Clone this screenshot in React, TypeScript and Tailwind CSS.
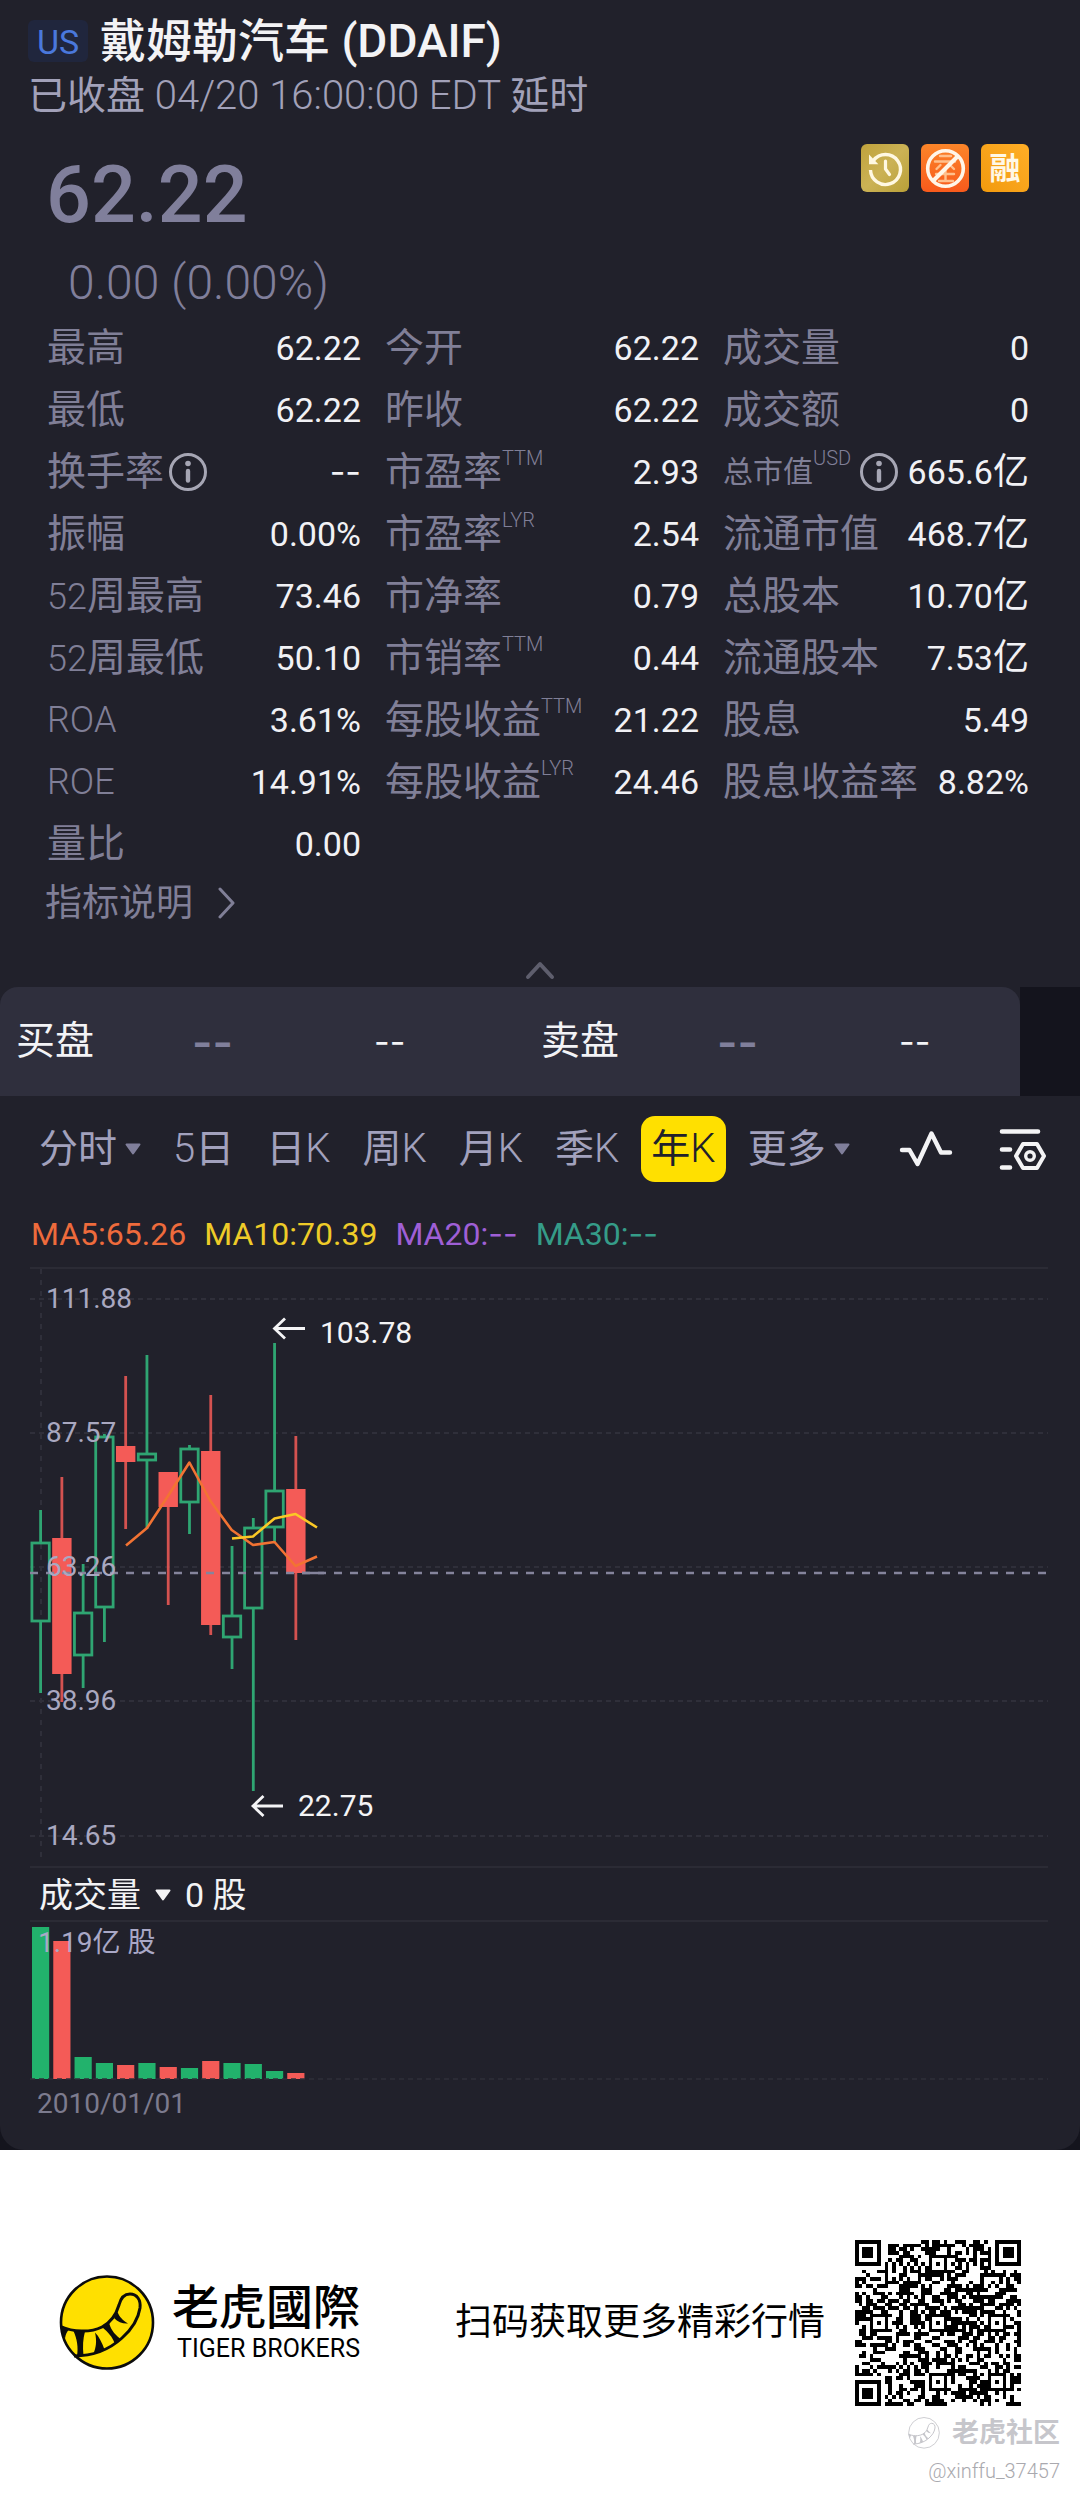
import React from 'react';

interface Stat {
    label: string;
    value: string;
    sup?: string;
    info?: boolean;
    small?: boolean;
}

interface Candle {
    up: boolean;
    high: number;
    top: number;
    bottom: number;
    low: number;
    volume: number;
}

const STATS: Stat[] = [
    { label: '最高', value: '62.22' },
    { label: '今开', value: '62.22' },
    { label: '成交量', value: '0' },
    { label: '最低', value: '62.22' },
    { label: '昨收', value: '62.22' },
    { label: '成交额', value: '0' },
    { label: '换手率', value: '--', info: true },
    { label: '市盈率', sup: 'TTM', value: '2.93' },
    { label: '总市值', sup: 'USD', value: '665.6亿', info: true, small: true },
    { label: '振幅', value: '0.00%' },
    { label: '市盈率', sup: 'LYR', value: '2.54' },
    { label: '流通市值', value: '468.7亿' },
    { label: '52周最高', value: '73.46' },
    { label: '市净率', value: '0.79' },
    { label: '总股本', value: '10.70亿' },
    { label: '52周最低', value: '50.10' },
    { label: '市销率', sup: 'TTM', value: '0.44' },
    { label: '流通股本', value: '7.53亿' },
    { label: 'ROA', value: '3.61%' },
    { label: '每股收益', sup: 'TTM', value: '21.22' },
    { label: '股息', value: '5.49' },
    { label: 'ROE', value: '14.91%' },
    { label: '每股收益', sup: 'LYR', value: '24.46' },
    { label: '股息收益率', value: '8.82%' },
    { label: '量比', value: '0.00' },
];

const PERIODS = [
    { label: '分时', menu: true },
    { label: '5日' },
    { label: '日K' },
    { label: '周K' },
    { label: '月K' },
    { label: '季K' },
    { label: '年K', active: true },
    { label: '更多', menu: true },
];

// Prices are already projected to chart units (y grows downwards)
const CANDLES: Candle[] = [
    { up: true, high: 250, top: 283, bottom: 361, low: 433, volume: 152 },
    { up: false, high: 217, top: 278, bottom: 414, low: 442, volume: 138 },
    { up: true, high: 304, top: 353, bottom: 395, low: 428, volume: 22 },
    { up: true, high: 174, top: 177, bottom: 347, low: 382, volume: 16 },
    { up: false, high: 116, top: 186, bottom: 202, low: 269, volume: 14 },
    { up: true, high: 95, top: 194, bottom: 200, low: 269, volume: 16 },
    { up: false, high: 212, top: 212, bottom: 247, low: 345, volume: 12 },
    { up: true, high: 185, top: 189, bottom: 242, low: 274, volume: 11 },
    { up: false, high: 135, top: 191, bottom: 365, low: 375, volume: 18 },
    { up: true, high: 286, top: 356, bottom: 377, low: 409, volume: 16 },
    { up: true, high: 258, top: 268, bottom: 348, low: 531, volume: 15 },
    { up: true, high: 83, top: 231, bottom: 267, low: 283, volume: 8 },
    { up: false, high: 176, top: 229, bottom: 313, low: 380, volume: 6 },
];

const GRID = [
    { y: 39, price: '111.88' },
    { y: 173, price: '87.57' },
    { y: 307, price: '63.26' },
    { y: 441, price: '38.96' },
    { y: 576, price: '14.65' },
];

const GREEN = '#2fa572';
const RED = '#f45b57';
const candleX = (i: number) => 40.6 + i * 21.27;

// Latin glyphs are set at their own size next to the CJK ones
const Mixed: React.FC<{ text: string; cjk: string; latin: string }> = ({ text, cjk, latin }) => (
    <>
        {(text.match(/--|[\u4e00-\u9fff]+|[^\u4e00-\u9fff-]+/g) || []).map((part, i) => {
            if (part === '--') return <span key={i} className={`font-[Inter,sans-serif] ${latin}`}>--</span>;
            return <span key={i} className={/[\u4e00-\u9fff]/.test(part) ? cjk : latin}>{part}</span>;
        })}
    </>
);

const InfoIcon = () => (
    <svg viewBox="0 0 40 40" className="size-10 shrink-0" fill="none" stroke="#a6a6b4" aria-hidden="true">
        <circle cx="20" cy="20" r="17.5" strokeWidth="3" />
        <circle cx="20" cy="11.5" r="2.8" fill="#a6a6b4" stroke="none" />
        <path d="M20 19v9.5" strokeWidth="4.4" strokeLinecap="round" />
    </svg>
);

const Caret = ({ className }: { className: string }) => (
    <svg viewBox="0 0 16 12" className={className} fill="currentColor" stroke="currentColor" strokeWidth="2" strokeLinejoin="round" aria-hidden="true">
        <path d="M1.5 1.5h13L8 10.5z" />
    </svg>
);

const Badges = () => (
    <div className="flex gap-3">
        <svg viewBox="0 0 48 48" className="size-12" aria-hidden="true">
            <defs>
                <linearGradient id="gold" x1="0" y1="0" x2="1" y2="1">
                    <stop offset="0" stopColor="#c0a23c" />
                    <stop offset="0.5" stopColor="#cbb255" />
                    <stop offset="1" stopColor="#b9a038" />
                </linearGradient>
            </defs>
            <rect width="48" height="48" rx="6" fill="url(#gold)" />
            <g fill="none" stroke="#fff8e2">
                <path d="M12.5 16.5A15 15 0 1 1 9.5 26" strokeWidth="3.4" />
                <path d="M24.5 17v8l4 5.5" strokeWidth="3.2" strokeLinecap="round" strokeLinejoin="round" />
            </g>
            <path d="M8 10.5v9.8h9.4z" fill="#fff8e2" />
        </svg>
        <svg viewBox="0 0 48 48" className="size-12" aria-hidden="true">
            <defs>
                <linearGradient id="orange" x1="0" y1="0" x2="0" y2="1">
                    <stop offset="0" stopColor="#fb8529" />
                    <stop offset="1" stopColor="#f85a1c" />
                </linearGradient>
            </defs>
            <rect width="48" height="48" rx="6" fill="url(#orange)" />
            <g fill="none" stroke="#ffc08c" strokeWidth="2.4" strokeLinecap="round">
                <path d="M19 12h11M14 17.5h20M19.5 21l-4 4M29 21l4 4M15 30h18M24.5 24v13M18 37h14" />
            </g>
            <circle cx="24.5" cy="24.5" r="17.8" fill="none" stroke="#fff6e8" strokeWidth="3.6" />
            <path d="M12.5 36.5l24-24" stroke="#fff6e8" strokeWidth="4" />
        </svg>
        <span className="flex size-12 items-center justify-center rounded-md bg-linear-to-bl from-[#ffae26] to-[#f29a0c] text-[31px] leading-none font-bold text-[#fff8e6]">融</span>
    </div>
);

const StatItem: React.FC<{ stat: Stat }> = ({ stat }) => (
    <div className="flex h-[62px] items-center justify-between whitespace-nowrap">
        <dt className="flex items-center text-[#807f97]">
            <span>
                <Mixed text={stat.label} cjk={stat.small ? 'text-[30px]' : 'text-[39px]'} latin="text-[36px] font-light" />
            </span>
            {stat.sup && <sup className="top-0 mb-7 text-[20px] font-light">{stat.sup}</sup>}
            {stat.info && <span className={stat.small ? 'ml-2' : 'ml-1'}><InfoIcon /></span>}
        </dt>
        <dd className="text-[#f1f1f5]">
            <Mixed text={stat.value} cjk="text-[36px]" latin="text-[34px]" />
        </dd>
    </div>
);

const OrderSide = ({ label }: { label: string }) => (
    <div className="flex w-[525px] shrink-0 items-center">
        <span className="w-44 text-[39px] text-[#f3f3f6]">{label}</span>
        <span className="w-[182px] font-[Inter,sans-serif] text-[44px] font-semibold text-[#807f9b]">--</span>
        <span className="font-[Inter,sans-serif] text-[34px] text-[#f3f3f6]">--</span>
    </div>
);

const PriceChart = () => (
    <svg viewBox="0 0 1080 610" className="block w-full" role="img" aria-label="年K">
        <g stroke="#2f2f3a" strokeWidth="1.5">
            <path d="M30 8h1018M30 607h1018" />
            <path d="M41 9v594" strokeDasharray="5 6" strokeWidth="2" />
            {GRID.map(({ y }) => <path key={y} d={`M30 ${y}h1018`} strokeDasharray="5 4" strokeWidth="2" />)}
        </g>
        {CANDLES.map((c, i) => {
            const x = candleX(i);
            const color = c.up ? GREEN : RED;
            return (
                <g key={i} stroke={color} strokeWidth="2.8">
                    <path d={`M${x} ${c.high}V${c.top}M${x} ${c.bottom}V${c.low}`} opacity={c.up ? 1 : 0.85} />
                    {c.up
                        ? <rect x={x - 8.7} y={c.top} width="17.4" height={c.bottom - c.top} fill="none" />
                        : <rect x={x - 9.7} y={c.top} width="19.4" height={c.bottom - c.top} fill={color} stroke="none" />}
                </g>
            );
        })}
        <path d="M30 313h1018" stroke="#85849c" strokeWidth="2.5" strokeDasharray="8 8" />
        <path d="M302 313h22" stroke="#85849c" strokeWidth="2.5" />
        <g fill="none" strokeWidth="2.6" strokeLinejoin="round">
            <path d="M126 285.5L147 268L168 236L189.4 202.5L210.4 241L231.7 270L253 285L274.5 282L295.5 306L317 296.5" stroke="#f27333" />
            <path d="M232 278.5L253 276.5L274.5 258.5L295.5 254L317 267.5" stroke="#fbc826" />
        </g>
        <g fill="#a9a8c0" fontSize="28">
            {GRID.map(({ y, price }) => <text key={y} x="46" y={y + 9}>{price}</text>)}
        </g>
        <g fill="none" stroke="#f4f4f6" strokeWidth="2.8">
            <path d="M305 68.5h-30M285 58.5l-10.5 10l10.5 10" />
            <path d="M283 546h-30M263.5 536l-10.5 10l10.5 10" />
        </g>
        <g fill="#f4f4f6" fontSize="30">
            <text x="320" y="83">103.78</text>
            <text x="298" y="556">22.75</text>
        </g>
    </svg>
);

const VolumeChart = () => (
    <svg viewBox="0 0 1080 162" className="block w-full" role="img" aria-label="成交量">
        <path d="M30 1h1018" stroke="#2f2f3a" strokeWidth="1.5" />
        {CANDLES.map((c, i) => (
            <rect key={i} x={candleX(i) - 8.6} y={159 - c.volume} width="17.2" height={c.volume} fill={c.up ? '#22b26c' : RED} />
        ))}
        <path d="M30 159h1018" stroke="#2f2f3a" strokeWidth="1.5" strokeDasharray="5 4" />
        <text x="38" y="32" fill="#a9a8c6" fontSize="28">1.19亿 股</text>
    </svg>
);

const TigerMark = ({ className, ring, fill }: { className: string; ring: string; fill: string }) => (
    <svg viewBox="0 0 96 96" className={className} fill="none" stroke={ring} strokeWidth="2.6" aria-hidden="true">
        <circle cx="48" cy="47.5" r="46" fill={fill} />
        <path d="M1.5 51.5C14 57 31 58 43 52C52 47.500 57 40 60 30C62 22 66 19 71 19C78 19 82 25 81 33C79 46 72 55 63 63C52 73 36 81 15 81" strokeWidth="3" />
        <g fill={ring} stroke="none">
            <path d="M1.5 50l8.5 4.5c-2 2-3.5 5-4 9c-3-4-4.5-8-4.5-13.5z" />
            <path d="M14.5 56l11.5.5c-2 7-2.5 15-1.5 24l-6.5.5c1.5-9 0-17-3.5-25z" />
            <path d="M36 57.5c4 4 7 10 9.500 17l-11 4c2.500-6 3.500-12 1.500-21z" />
            <path d="M43 52l7-5c1 6 5 12 11 16.500l-5.500 4.500c-2-6-6.500-11-12.500-16z" />
            <path d="M55 43l3.500-6c2 5 5 8 10.500 11.500c-5 .5-10-1.500-14-5.500z" />
        </g>
    </svg>
);

const QR_SIZE = 45;

// Finder, timing and alignment marks, with generated data modules in between
const buildQrPath = () => {
    const ring = (x: number, y: number, cx: number, cy: number) => Math.max(Math.abs(x - cx), Math.abs(y - cy));
    let seed = 37457;
    let d = '';
    for (let y = 0; y < QR_SIZE; y++) {
        for (let x = 0; x < QR_SIZE; x++) {
            seed = (seed * 1103515245 + 12345) % 2147483648;
            let dark = (seed >> 16) % 100 < 50;
            if (x === 6 || y === 6) dark = (x + y) % 2 === 0;
            for (const [cx, cy] of [[22, 6], [6, 22], [22, 22], [38, 22], [22, 38], [38, 38]]) {
                const r = ring(x, y, cx, cy);
                if (r <= 2) dark = r !== 1;
            }
            for (const [cx, cy] of [[3, 3], [41, 3], [3, 41]]) {
                const r = ring(x, y, cx, cy);
                if (r <= 4) dark = r === 3 || r < 2;
            }
            if (dark) d += `M${x} ${y}h1v1h-1z`;
        }
    }
    return d;
};

const QR_PATH = buildQrPath();

const App: React.FC = () => {
    return (
        <div className="bg-white font-[Roboto,'Noto_Sans_CJK_SC',sans-serif] leading-none">
            <div className="bg-[#14141d]">
                <main className="overflow-hidden rounded-b-3xl bg-[#21212b]">
                    <header className="px-7 pt-[18px]">
                        <h1 className="flex items-center whitespace-nowrap text-[#f3f3f5]">
                            <span className="mr-3 flex h-[42px] w-15 items-center justify-center rounded-md bg-[#20263d] pt-0.5 text-[34px] font-normal text-[#4a78dc]">US</span>
                            <span className="text-[46px] font-medium">戴姆勒汽车 (DDAIF)</span>
                        </h1>
                        <p className="mt-3 whitespace-nowrap text-[#a2a1b9]">
                            <Mixed text="已收盘 04/20 16:00:00 EDT 延时" cjk="text-[39px]" latin="text-[40px] font-light" />
                        </p>
                    </header>

                    <section className="flex items-start justify-between pt-7 pr-[51px] pl-[46px]">
                        <div className="text-[#807f9b]">
                            <p className="pt-3 text-[79px] font-medium">62.22</p>
                            <p className="mt-6 pl-[22px] text-[48px] font-light">0.00 (0.00%)</p>
                        </div>
                        <Badges />
                    </section>

                    <dl className="mt-[10px] grid grid-cols-[313fr_313fr_305fr] gap-x-6 pr-[51px] pl-[47px]">
                        {STATS.map((stat, i) => <StatItem key={i} stat={stat} />)}
                    </dl>

                    <a href="#indicators" className="ml-[45px] inline-flex h-14 items-center gap-6 text-[37px] text-[#807f97]">
                        指标说明
                        <svg viewBox="0 0 20 32" className="h-8 w-5" fill="none" stroke="currentColor" strokeWidth="3" strokeLinecap="round" strokeLinejoin="round" aria-hidden="true">
                            <path d="M3 2l13 14L3 30" />
                        </svg>
                    </a>

                    <button type="button" aria-label="收起" className="mt-[21px] flex h-[35px] w-full items-center justify-center text-[#5e5e6d]">
                        <svg viewBox="0 0 30 20" className="h-5 w-[30px]" fill="none" stroke="currentColor" strokeWidth="4" strokeLinecap="round" strokeLinejoin="round" aria-hidden="true">
                            <path d="M3 17L15 4l12 13" />
                        </svg>
                    </button>

                    <section className="flex h-[109px] bg-[#14141d]">
                        <div className="min-w-0 flex-1 bg-[#21212b]">
                            <div className="flex h-full items-center overflow-hidden rounded-t-[18px] bg-[#2f2f3d] pl-4 whitespace-nowrap">
                                <OrderSide label="买盘" />
                                <OrderSide label="卖盘" />
                            </div>
                        </div>
                        <div className="w-15 shrink-0" />
                    </section>

                    <nav className="flex items-center pt-5 pr-8 pl-[39px] text-[#a2a1bd]">
                        <div className="flex items-center gap-8 whitespace-nowrap">
                            {PERIODS.map(({ label, menu, active }) => (
                                <button
                                    key={label}
                                    type="button"
                                    className={active
                                        ? '-mx-[10px] flex h-[66px] items-center rounded-[14px] bg-[#ffe000] px-[10px] text-[#21212b]'
                                        : 'flex h-[66px] items-center'}
                                >
                                    <span>
                                        <Mixed text={label} cjk="text-[39px]" latin="text-[40px] font-light" />
                                    </span>
                                    {menu && <Caret className="ml-2 h-3 w-4 text-[#807f9b]" />}
                                </button>
                            ))}
                        </div>
                        <div className="ml-auto flex items-center gap-11 text-[#f3f3f5]">
                            <button type="button" aria-label="指标">
                                <svg viewBox="0 0 56 44" className="h-11 w-14" fill="none" stroke="currentColor" strokeWidth="4.4" strokeLinecap="round" strokeLinejoin="round" aria-hidden="true">
                                    <path d="M4 23h7.5L19.5 37L33.5 6.5L43 25.5h9" />
                                </svg>
                            </button>
                            <button type="button" aria-label="设置">
                                <svg viewBox="0 0 50 44" className="h-11 w-[50px]" fill="none" stroke="currentColor" strokeWidth="4" strokeLinecap="round" strokeLinejoin="round" aria-hidden="true">
                                    <path d="M4 4.5h36M4 22.5h8M4 40.5h8" strokeWidth="4.6" />
                                    <path d="M25 17h14l7 12l-7 12H25l-7-12z" />
                                    <circle cx="32" cy="29" r="4.3" strokeWidth="3.4" />
                                </svg>
                            </button>
                        </div>
                    </nav>

                    <div className="mt-9 flex gap-[18px] pl-[31px] text-[32px] whitespace-nowrap">
                        <span className="text-[#ee6b3c]">MA5:65.26</span>
                        <span className="text-[#eecb28]">MA10:70.39</span>
                        <span className="text-[#9f5fd6]"><Mixed text="MA20:--" cjk="" latin="" /></span>
                        <span className="text-[#359c88]"><Mixed text="MA30:--" cjk="" latin="" /></span>
                    </div>

                    <div className="mt-[10px]">
                        <PriceChart />
                    </div>
                    <button type="button" className="flex h-[50px] items-center pl-[39px] text-[34px] text-[#f3f3f5]">
                        成交量
                        <Caret className="mx-[14px] h-3 w-4" />
                        <Mixed text="0 股" cjk="" latin="whitespace-pre" />
                    </button>
                    <VolumeChart />
                    <p className="pt-2 pb-8 pl-[37px] text-[28px] text-[#7c7b8e]">2010/01/01</p>
                </main>
            </div>

            <footer className="relative flex h-[345px] items-center pr-[59px] pl-[59px] whitespace-nowrap text-black">
                <div className="flex items-center gap-[17px]">
                    <TigerMark className="size-24" ring="#0c0c0c" fill="#ffe000" />
                    <div className="flex flex-col items-end gap-[5px]">
                        <span className="font-[Roboto,'Noto_Sans_CJK_TC',sans-serif] text-[47px] font-medium">老虎國際</span>
                        <span className="text-[25px]">TIGER BROKERS</span>
                    </div>
                </div>
                <p className="ml-auto text-[37px]">扫码获取更多精彩行情</p>
                <svg viewBox="0 0 45 45" className="ml-[30px] size-[166px]" shapeRendering="crispEdges" role="img" aria-label="QR">
                    <path d={QR_PATH} fill="#000" />
                </svg>
                <div className="absolute right-5 bottom-[14px] flex flex-col items-end gap-3 text-[#c6c6cb]">
                    <span className="flex items-center gap-3 text-[27px] font-bold">
                        <TigerMark className="size-8" ring="#c6c6cb" fill="none" />
                        老虎社区
                    </span>
                    <span className="text-[20px] font-light text-[#a9a9ae]">@xinffu_37457</span>
                </div>
            </footer>
        </div>
    );
};

export default App;
